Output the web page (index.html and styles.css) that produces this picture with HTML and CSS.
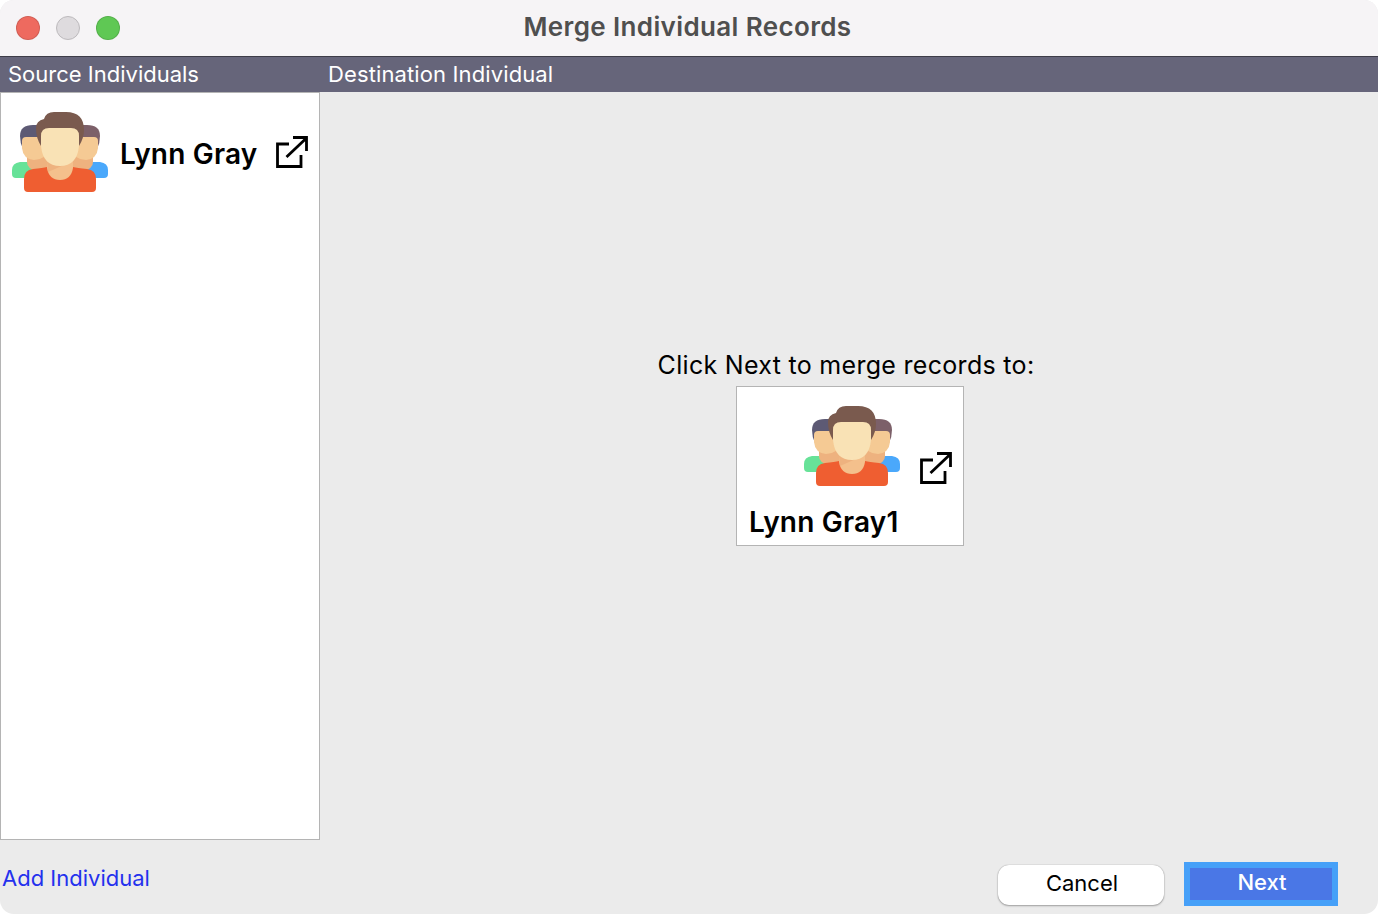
FILE: index.html
```html
<!DOCTYPE html>
<html lang="en">
<head>
    <meta charset="UTF-8">
    <title>Merge Individual Records</title>
    <link rel="stylesheet" href="styles.css">
</head>
<body>

<svg class="icon-defs" width="0" height="0">
    <symbol id="people" viewBox="0 0 96 80">
        <!-- left person -->
        <path d="M0 58q0-7 8-8h8q8 4 14 0h6l4 8v8H4q-4 0-4-4z" fill="#67e298"/>
        <path d="M11 37q-3-6-3-13 0-11 13-11h15v24z" fill="#5d5a74"/>
        <path d="M15 40h21v16q-3 4-11 3-10-2-10-9z" fill="#eeb27f"/>
        <path d="M10 29q0-4 4-4h24v12q-5 11-16 11-11-1-12-12z" fill="#f5ca94"/>
        <!-- right person -->
        <path d="M96 58q0-7-8-8h-8q-8 4-14 0h-6l-4 8v8h36q4 0 4-4z" fill="#4aa8fb"/>
        <path d="M85 37q3-6 3-13 0-11-13-11H60v24z" fill="#7c6069"/>
        <path d="M81 40H60v16q3 4 11 3 10-2 10-9z" fill="#eeb27f"/>
        <path d="M86 29q0-4-4-4H58v12q5 11 16 11 11-1 12-12z" fill="#f5ca94"/>
        <!-- front person -->
        <path d="M12 67q0-9 9-10 10-1 14-2h26q4 1 14 2 9 1 9 10v9q0 4-4 4H16q-4 0-4-4z" fill="#ef5e31"/>
        <path d="M35 44h26v12q-2 12-13 12T35 56z" fill="#f4c08c"/>
        <path d="M35 50 61 44v5L36 60z" fill="#eeb27f"/>
        <path d="M29 34q-5-8-5-18 0-7 8-9 2-7 10-7h12q18 0 18 18 0 8-5 16z" fill="#7a5a4e"/>
        <path d="M29 24q0-8 8-8h22q8 0 8 8v10q-2 20-19 20T29 34z" fill="#f9e2b5"/>
    </symbol>
    <symbol id="open-link" viewBox="0 0 32 32">
        <path d="M13 8H1.5v22.5H25V19M10.5 21 30 2.5M17 1.5h13.5V15" fill="none" stroke="#000" stroke-width="2.8"/>
    </symbol>
</svg>

<div class="window">
    <div class="titlebar">
        <div class="lights">
            <span class="light light-close"></span>
            <span class="light light-min"></span>
            <span class="light light-max"></span>
        </div>
        <div class="title">Merge Individual Records</div>
    </div>

    <div class="header">
        <div class="header-source">Source Individuals</div>
        <div class="header-dest">Destination Individual</div>
    </div>

    <div class="content">
        <div class="source-list">
            <div class="source-item">
                <svg class="people-icon"><use href="#people"/></svg>
                <span class="person-name source-name">Lynn Gray</span>
                <svg class="link-icon"><use href="#open-link"/></svg>
            </div>
        </div>
        <div class="dest-pane">
            <div class="dest-label">Click Next to merge records to:</div>
            <div class="dest-card">
                <div class="dest-card-top">
                    <svg class="people-icon"><use href="#people"/></svg>
                    <svg class="link-icon"><use href="#open-link"/></svg>
                </div>
                <span class="person-name">Lynn Gray1</span>
            </div>
        </div>
    </div>

    <div class="footer">
        <a class="add-link" href="#">Add Individual</a>
        <div class="buttons">
            <button class="btn btn-cancel">Cancel</button>
            <button class="btn btn-next">Next</button>
        </div>
    </div>
</div>

</body>
</html>
```

FILE: styles.css
```css
* {
    box-sizing: border-box;
}

body {
    margin: 0;
    background-color: #fff;
    font-family: Inter, "Liberation Sans", sans-serif;
}

.icon-defs {
    position: absolute;
}

.window {
    display: flex;
    flex-direction: column;
    height: 914px;
    background-color: #ebebeb;
    border-radius: 14px;
    overflow: hidden;
}

/* title bar */
.titlebar {
    display: flex;
    align-items: center;
    flex: none;
    height: 57px;
    padding: 0 270px 3px 16px;
    background-color: #f6f4f6;
    border-bottom: 1px solid #3d3c48;
}

.lights {
    display: flex;
    gap: 16px;
    width: 251px;
    margin-top: 2px;
}

.light {
    width: 24px;
    height: 24px;
    border-radius: 50%;
    border: 1px solid rgba(0, 0, 0, 0.12);
}

.light-close { background-color: #ee6a5f; }
.light-min { background-color: #dedbde; border-color: #bdbabd; }
.light-max { background-color: #5fc854; }

.title {
    flex: 1;
    text-align: center;
    font-size: 26px;
    font-weight: 600;
    letter-spacing: 0.37px;
    color: #4f4f4f;
}

/* column headers */
.header {
    display: flex;
    align-items: center;
    flex: none;
    height: 35px;
    padding-bottom: 2px;
    background-color: #66657a;
    color: #fff;
    font-size: 22px;
}

.header-source {
    width: 320px;
    padding-left: 8px;
}

.header-dest {
    padding-left: 8px;
    letter-spacing: 0.12px;
}

/* main area */
.content {
    display: flex;
    flex: none;
    height: 748px;
}

.source-list {
    flex: none;
    width: 320px;
    background-color: #fff;
    border: 1px solid #b4b4b4;
}

.source-item {
    display: flex;
    align-items: flex-start;
    padding: 19px 0 0 11px;
}

.people-icon {
    flex: none;
    width: 96px;
    height: 80px;
}

.link-icon {
    flex: none;
    width: 32px;
    height: 32px;
}

.person-name {
    font-size: 28px;
    font-weight: 600;
    letter-spacing: 0.2px;
    color: #000;
}

.source-name {
    width: 156px;
    margin: 25px 0 0 12px;
}

.source-item .link-icon {
    margin-top: 24px;
}

.dest-pane {
    display: flex;
    flex: 1;
    flex-direction: column;
    align-items: center;
    padding-top: 258px;
}

.dest-label {
    height: 36px;
    margin-right: 6px;
    font-size: 25px;
    letter-spacing: 0.3px;
    color: #000;
}

.dest-card {
    display: flex;
    flex-direction: column;
    width: 228px;
    height: 160px;
    margin-left: 2px;
    padding: 19px 0 0 12px;
    background-color: #fff;
    border: 1px solid #b4b4b4;
}

.dest-card-top {
    display: flex;
    align-items: flex-end;
    gap: 20px;
    height: 80px;
    margin-bottom: 19px;
    padding-left: 55px;
}

.dest-card-top .link-icon {
    margin-bottom: 2px;
}

/* footer */
.footer {
    display: flex;
    flex: 1;
    justify-content: space-between;
    padding: 22px 40px 0 2px;
}

.add-link {
    padding-top: 3px;
    font-size: 22px;
    color: #2431ee;
    text-decoration: none;
}

.buttons {
    display: flex;
    align-items: center;
    gap: 20px;
    height: 44px;
}

.btn {
    font-family: inherit;
    font-size: 22px;
    padding: 0 0 5px 2px;
}

.btn-cancel {
    width: 166px;
    height: 40px;
    margin-top: 2px;
    background-color: #fff;
    color: #000;
    border: none;
    border-radius: 11px;
    box-shadow: 0 0 1px rgba(0, 0, 0, 0.4), 0 1px 2px rgba(0, 0, 0, 0.3);
}

.btn-next {
    width: 154px;
    height: 44px;
    background-color: #4a77e6;
    color: #fff;
    border: 6px solid #46a0f8;
    font-weight: 500;
}
```
